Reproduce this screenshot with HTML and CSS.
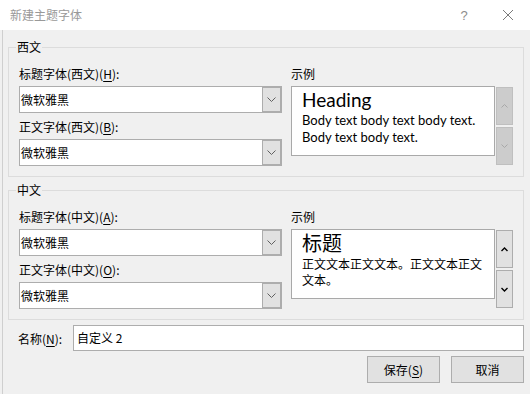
FILE: index.html
```html
<!DOCTYPE html>
<html lang="zh-CN">
<head>
<meta charset="utf-8">
<title>新建主题字体</title>
<link rel="stylesheet" href="styles.css">
</head>
<body>
<div class="window">
  <div class="titlebar">
    <span class="title">新建主题字体</span>
    <span class="help">?</span>
    <span class="close">
      <svg width="12" height="12" viewBox="0 0 12 12"><path d="M1 1 L11 11 M11 1 L1 11" stroke="#7a7a7a" stroke-width="1" fill="none"/></svg>
    </span>
  </div>
  <div class="content">
    <fieldset class="group">
      <legend>西文</legend>
      <div class="cols">
        <div class="fields">
          <div class="lbl">标题字体(西文)(<u>H</u>):</div>
          <div class="combo"><span class="val">微软雅黑</span><span class="drop"><svg width="9" height="5" viewBox="0 0 9 5"><path d="M0.5 0.5 L4.5 4.5 L8.5 0.5" stroke="#606060" fill="none"/></svg></span></div>
          <div class="lbl second">正文字体(西文)(<u>B</u>):</div>
          <div class="combo"><span class="val">微软雅黑</span><span class="drop"><svg width="9" height="5" viewBox="0 0 9 5"><path d="M0.5 0.5 L4.5 4.5 L8.5 0.5" stroke="#606060" fill="none"/></svg></span></div>
        </div>
        <div class="sample">
          <div class="lbl">示例</div>
          <div class="sample-row">
            <div class="preview latin">
              <div class="ph">Heading</div>
              <div class="pb">Body text body text body text.<br>Body text body text.</div>
            </div>
            <div class="scroll disabled">
              <span class="sbtn"><svg width="7" height="4" viewBox="0 0 7 4"><path d="M0.5 3.5 L3.5 0.5 L6.5 3.5" stroke="#a8a8a8" fill="none"/></svg></span>
              <span class="sbtn"><svg width="7" height="4" viewBox="0 0 7 4"><path d="M0.5 0.5 L3.5 3.5 L6.5 0.5" stroke="#a8a8a8" fill="none"/></svg></span>
            </div>
          </div>
        </div>
      </div>
    </fieldset>

    <fieldset class="group g2">
      <legend>中文</legend>
      <div class="cols">
        <div class="fields">
          <div class="lbl">标题字体(中文)(<u>A</u>):</div>
          <div class="combo"><span class="val">微软雅黑</span><span class="drop"><svg width="9" height="5" viewBox="0 0 9 5"><path d="M0.5 0.5 L4.5 4.5 L8.5 0.5" stroke="#606060" fill="none"/></svg></span></div>
          <div class="lbl second">正文字体(中文)(<u>O</u>):</div>
          <div class="combo"><span class="val">微软雅黑</span><span class="drop"><svg width="9" height="5" viewBox="0 0 9 5"><path d="M0.5 0.5 L4.5 4.5 L8.5 0.5" stroke="#606060" fill="none"/></svg></span></div>
        </div>
        <div class="sample">
          <div class="lbl">示例</div>
          <div class="sample-row">
            <div class="preview cjk">
              <div class="ph">标题</div>
              <div class="pb">正文文本正文文本。正文文本正文<br>文本。</div>
            </div>
            <div class="scroll">
              <span class="sbtn"><svg width="7" height="5" viewBox="0 0 7 5"><path d="M0.5 4 L3.5 1 L6.5 4" stroke="#000" stroke-width="1.4" fill="none"/></svg></span>
              <span class="sbtn"><svg width="7" height="5" viewBox="0 0 7 5"><path d="M0.5 1 L3.5 4 L6.5 1" stroke="#000" stroke-width="1.4" fill="none"/></svg></span>
            </div>
          </div>
        </div>
      </div>
    </fieldset>

    <div class="name-row">
      <span class="name-lbl">名称(<u>N</u>):</span>
      <div class="name-input">自定义 2</div>
    </div>

    <div class="buttons">
      <button class="btn">保存(<u>S</u>)</button>
      <button class="btn">取消</button>
    </div>
  </div>
</div>
</body>
</html>
```

FILE: styles.css
```css
* { box-sizing: border-box; }

html, body {
  margin: 0;
  padding: 0;
  width: 530px;
  height: 394px;
  overflow: hidden;
  background: #f0f0f0;
  font-family: "Noto Sans CJK SC", "Noto Sans", sans-serif;
  font-size: 12px;
  color: #000;
}

.window {
  width: 530px;
  height: 394px;
  display: flex;
  flex-direction: column;
}

.titlebar {
  height: 30px;
  flex: none;
  background: #fff;
  display: flex;
  align-items: center;
  padding-left: 10px;
}

.title {
  color: #999;
  font-size: 12px;
  line-height: 16px;
  flex: 1;
}

.help {
  color: #8c8c8c;
  font-family: "Liberation Sans", sans-serif;
  font-size: 13px;
  width: 14px;
  text-align: center;
  margin-right: 31px;
}

.close {
  width: 12px;
  height: 12px;
  display: flex;
  margin-right: 16px;
}

.content {
  flex: 1;
  margin-left: 2px;
  border-left: 1px solid #cfcfcf;
  padding: 9px 6px 0 5px;
  display: flex;
  flex-direction: column;
}

.group {
  margin: 0;
  padding: 10px 10px 10px 10px;
  border: 1px solid #dcdcdc;
  min-width: 0;
}

.group.g2 { margin-top: 5px; }

.group legend {
  padding: 0 1px;
  margin-left: -3px;
  font-size: 12px;
  line-height: 16px;
}

.cols {
  display: grid;
  grid-template-columns: 263px 222px;
  column-gap: 9px;
}

.lbl {
  height: 18px;
  line-height: 18px;
  margin-bottom: 3px;
  white-space: nowrap;
}

.lbl.second { margin-top: 5px; }

.combo {
  height: 27px;
  border: 1px solid #adadad;
  background: #fff;
  display: flex;
}

.combo .val {
  flex: 1;
  padding-left: 1px;
  line-height: 25px;
}

.combo .drop {
  width: 19px;
  border: 1px solid #adadad;
  background: #e1e1e1;
  display: flex;
  align-items: center;
  justify-content: center;
}

.sample-row {
  display: flex;
  gap: 1px;
}

.preview {
  width: 204px;
  height: 70px;
  border: 1px solid #a9a9a9;
  background: #fff;
  padding: 2px 0 0 10px;
  white-space: nowrap;
  overflow: hidden;
}

.preview.latin .ph {
  font-family: "Lato", "Open Sans", sans-serif;
  font-size: 19px;
  line-height: 22px;
}

.preview.latin .pb {
  font-family: "Lato", "Open Sans", sans-serif;
  font-size: 13px;
  line-height: 17px;
  margin-top: 1px;
}

.preview.cjk { padding-top: 1px; }

.preview.cjk .ph {
  font-size: 20px;
  line-height: 24px;
}

.preview.cjk .pb {
  font-size: 12px;
  line-height: 16px;
  margin-top: 1px;
}

.scroll {
  width: 17px;
  margin-top: 1px;
  display: flex;
  flex-direction: column;
  gap: 2px;
}

.sbtn {
  height: 38px;
  border: 1px solid #adadad;
  background: #e1e1e1;
  display: flex;
  align-items: center;
  justify-content: center;
}

.scroll.disabled .sbtn {
  background: #cccccc;
  border-color: #bfbfbf;
}

.name-row {
  margin-top: 5px;
  display: flex;
  align-items: center;
  padding-left: 10px;
}

.name-lbl {
  width: 55px;
  white-space: nowrap;
}

.name-input {
  flex: 1;
  height: 26px;
  border: 1px solid #adadad;
  background: #fff;
  line-height: 24px;
  padding-left: 3px;
}

.buttons {
  margin-top: 5px;
  display: flex;
  justify-content: flex-end;
  gap: 11px;
}

.btn {
  width: 73px;
  height: 27px;
  margin: 0;
  padding: 0;
  border: 1px solid #adadad;
  background: #e1e1e1;
  font-family: "Noto Sans CJK SC", "Noto Sans", sans-serif;
  font-size: 12px;
  color: #000;
}

u { text-decoration-thickness: 1px; text-underline-offset: 2px; }
```
